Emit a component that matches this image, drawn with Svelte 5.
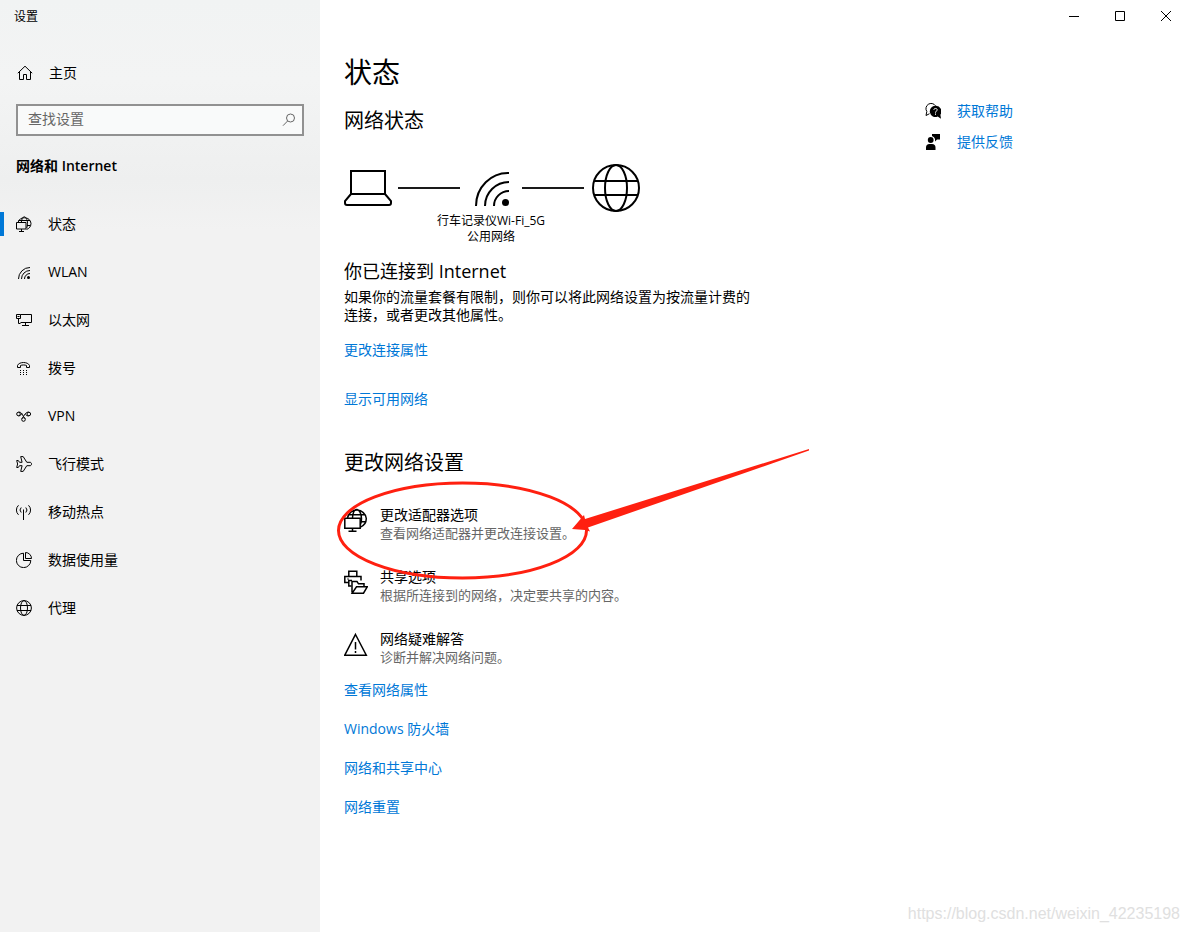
<script lang="ts">
	interface NavItem {
		id: string;
		label: string;
	}

	const navItems: NavItem[] = [
		{ id: 'status', label: '状态' },
		{ id: 'wlan', label: 'WLAN' },
		{ id: 'ethernet', label: '以太网' },
		{ id: 'dialup', label: '拨号' },
		{ id: 'vpn', label: 'VPN' },
		{ id: 'airplane', label: '飞行模式' },
		{ id: 'hotspot', label: '移动热点' },
		{ id: 'usage', label: '数据使用量' },
		{ id: 'proxy', label: '代理' }
	];

	const options = [
		{ id: 'adapter', title: '更改适配器选项', desc: '查看网络适配器并更改连接设置。' },
		{ id: 'sharing', title: '共享选项', desc: '根据所连接到的网络，决定要共享的内容。' },
		{ id: 'trouble', title: '网络疑难解答', desc: '诊断并解决网络问题。' }
	];

	const moreLinks = ['查看网络属性', 'Windows 防火墙', '网络和共享中心', '网络重置'];

	let active = $state('status');
	let query = $state('');
</script>

{#snippet navIcon(id: string)}
	<svg class="icon" viewBox="0 0 16 16" width="16" height="16" aria-hidden="true">
		{#if id === 'status'}
			<path d="M2 6.500A6.700 6.700 0 0 1 15 7.300a6.700 6.700 0 0 1-4.500 6.200M5.300 6.500C5.600 3 6.800.8 8.300.8s3.200 2.900 3.200 6.500c0 2.200-.3 3.700-.9 4.700M2.500 4.500H14M11 9.500h3.500" />
			<path d="M.5 6.500h9.500v6.500H.5zM5.500 13v2.500M3 15.500h5" />
		{:else if id === 'wlan'}
			<path d="M2.500 15A11.500 11.500 0 0 1 14 3.500M5.500 15A8.500 8.500 0 0 1 14 6.500M8.500 15A5.500 5.500 0 0 1 14 9.500" />
			<circle class="solid" cx="12.500" cy="13.500" r="1.500" />
		{:else if id === 'ethernet'}
			<path d="M4.500 2.500h11v8h-11M.5 2.500h4v4h-4zM2.500 6.500v5h2M1.500 4.500h2M9.500 10.500v3M6 13.500h7" />
		{:else if id === 'dialup'}
			<path d="M1.500 7.500V5.500C3 1.500 12 1.500 13.500 5.500v2h-3v-2C9 4.800 6 4.800 4.500 5.500v2z" />
			<path d="M4 10.500h1M7 10.500h1M10 10.500h1M4 12.500h1M7 12.500h1M10 12.500h1M4 14.500h1M7 14.500h1M10 14.500h1" />
		{:else if id === 'vpn'}
			<circle cx="2.500" cy="6" r="1.800" />
			<circle cx="12.800" cy="6" r="1.800" />
			<circle cx="7.500" cy="11.500" r="1.800" />
			<path d="M2.500 4.200C6 3.500 6 7.500 9.200 10.500M2.500 7.800C4.500 8 5 6.500 6 5.500M12.800 4.200C9.500 3.700 8.500 7.500 5.900 10.500M12.800 7.800C11 8 10.500 7.500 9.500 6.500" />
		{:else if id === 'airplane'}
			<path d="M4.700.6h2.500l3.600 5.700h3.200c2 0 2 3.400 0 3.400h-3.200L7.200 15.400H4.700l1.400-5.700H3.500L2.300 11.500H.7L1.600 8 .7 4.500h1.600L3.500 6.300h2.600z" />
		{:else if id === 'hotspot'}
			<path d="M7.500 5.500V16M5.200 3.500a3.600 3.600 0 0 0 0 5M9.800 3.500a3.600 3.600 0 0 1 0 5M2.500 1.300a6.500 6.500 0 0 0 0 9.500M12.500 1.300a6.500 6.500 0 0 1 0 9.500" />
		{:else if id === 'usage'}
			<path d="M7.500 1.200A7.200 7.200 0 1 0 14.800 8.500H7.500zM9.500.5v6h6a6 6 0 0 0-6-6z" />
		{:else}
			<circle cx="8" cy="8" r="7.400" />
			<ellipse cx="8" cy="8" rx="3.500" ry="7.400" />
			<path d="M1 5.500h14M1 10.500h14" />
		{/if}
	</svg>
{/snippet}

{#snippet optionIcon(id: string)}
	<svg class="option-icon" viewBox="0 0 24 24" width="24" height="24" aria-hidden="true">
		{#if id === 'adapter'}
			<path d="M3.500 10A9.500 9.500 0 0 1 22.300 10.500a9.500 9.500 0 0 1-5.800 8.600M8.500 10C8.800 5 10.500 1.500 12.800 1.500s4.700 4 4.700 9c0 2.500-.3 4.500-1 6M4.500 6.800h16.800M17 13.800h4.500" />
			<path d="M.8 10.200h15.400v10H.8zM8.500 20.200v3.300M4.500 23.300h8" />
		{:else if id === 'sharing'}
			<path d="M4.800 6.500V1.200h8v5.300M4.500 12.500H.8v-6H17v4M3.500 9h1M7.500 16H4.800v-5.500H8" />
			<path d="M8 22.500V11.500h5l1.500 2.300H20v3M8.200 23.200l4.300-6.400h10.700L19.500 23.200z" />
		{:else}
			<path d="M11.500 2.500L22.300 23.200H.8zM11.500 10v7.500M11.500 19v2" />
		{/if}
	</svg>
{/snippet}

<div class="window">
	<aside class="sidebar">
		<div class="app-title">设置</div>
		<a class="home" href="#home">
			<svg class="icon" viewBox="0 0 16 16" width="16" height="16" aria-hidden="true">
				<path d="M.8 8.200L8 1.200l7.200 7M2.500 7v7.500h4v-5h3v5h4V7" />
			</svg>
			主页
		</a>

		<div class="search">
			<input type="text" placeholder="查找设置" aria-label="查找设置" bind:value={query} />
			<button class="search-btn" aria-label="搜索">
				<svg viewBox="0 0 14 14" width="14" height="14" aria-hidden="true">
					<circle cx="8.500" cy="5" r="4" />
					<path d="M5.600 8L1 12.700" />
				</svg>
			</button>
		</div>

		<h2 class="category">网络和 Internet</h2>

		<nav>
			{#each navItems as item (item.id)}
				<a
					class="nav-item"
					class:active={active === item.id}
					href="#{item.id}"
					onclick={() => (active = item.id)}
				>
					{@render navIcon(item.id)}
					{item.label}
				</a>
			{/each}
		</nav>
	</aside>

	<div class="main">
		<header class="controls">
			<button aria-label="最小化">
				<svg viewBox="0 0 10 10" width="10" height="10"><path d="M0 5.500h10" /></svg>
			</button>
			<button aria-label="最大化">
				<svg viewBox="0 0 10 10" width="10" height="10"><path d="M.5.5h9v9h-9z" /></svg>
			</button>
			<button aria-label="关闭">
				<svg viewBox="0 0 10 10" width="10" height="10"><path d="M0 0l10 10M10 0L0 10" /></svg>
			</button>
		</header>

		<div class="page">
			<main class="content">
				<h1>状态</h1>
				<h2 class="section-title first">网络状态</h2>

				<div class="diagram">
					<svg viewBox="0 0 48 48" width="48" height="48" aria-hidden="true">
						<path d="M7 30V7h34v23zM7 30l-6 7v2q0 2 2 2h42q2 0 2-2v-2l-6-7" />
					</svg>
					<span class="wire"></span>
					<svg viewBox="0 0 48 48" width="48" height="48" aria-hidden="true">
						<path d="M8 42A32 33 0 0 1 41 9M17 42A24 24 0 0 1 41 18M26 42A15 15 0 0 1 41 27" />
						<circle class="solid" cx="37.500" cy="38.500" r="3.500" />
					</svg>
					<span class="wire"></span>
					<svg viewBox="0 0 48 48" width="48" height="48" aria-hidden="true">
						<circle cx="24" cy="24" r="23" />
						<ellipse cx="24" cy="24" rx="11" ry="23" />
						<path d="M2 17h44M2 31h44" />
					</svg>
					<div class="network-name">行车记录仪Wi-Fi_5G<br />公用网络</div>
				</div>

				<h3>你已连接到 Internet</h3>
				<p>如果你的流量套餐有限制，则你可以将此网络设置为按流量计费的连接，或者更改其他属性。</p>
				<a class="link" href="#properties">更改连接属性</a>
				<a class="link available" href="#available">显示可用网络</a>

				<section class="change">
					<h2 class="section-title">更改网络设置</h2>
					<div class="options">
						{#each options as option (option.id)}
							<a class="option" href="#{option.id}">
								{@render optionIcon(option.id)}
								<span>
									<span class="option-title">{option.title}</span>
									<span class="option-desc">{option.desc}</span>
								</span>
							</a>
						{/each}
					</div>
					<svg class="markup" viewBox="0 0 480 136" width="480" height="136" aria-hidden="true">
						<ellipse cx="126.500" cy="81.500" rx="124" ry="47.500" />
						<path d="M236 80l12-14 1 4L473 0v1.500L252 78.500l2 4-5-1.500z" />
					</svg>
				</section>

				<div class="more-links">
					{#each moreLinks as text (text)}
						<a class="link" href="#more">{text}</a>
					{/each}
				</div>
			</main>

			<aside class="help">
				<a class="link" href="#help">
					<svg viewBox="0 0 16 16" width="16" height="16" aria-hidden="true">
						<path class="bubble" d="M10.500 2.800A5.200 5.200 0 1 0 1.800 8.500L1 12.500l3.500-1.800" />
						<path d="M10.500 2.800a5.600 5.600 0 1 0 2.200 10.700L16 15.700l-.6-4A5.600 5.600 0 0 0 10.500 2.800z" />
						<path class="question" d="M8.800 6.800c.2-2 3.700-1.700 3.400.3-.2 1.100-1.700 1-1.700 2.600M10.500 10.500v1.300" />
					</svg>
					获取帮助
				</a>
				<a class="link" href="#feedback">
					<svg viewBox="0 0 16 16" width="16" height="16" aria-hidden="true">
						<circle cx="5.700" cy="6" r="2.900" />
						<path d="M1 16v-2.500Q1 10 4.500 10h2.500Q10.500 10 10.500 13.500V16zM7 0h8v5.500h-3L10 7.500V5Q9.500 3 7 2z" />
					</svg>
					提供反馈
				</a>
			</aside>
		</div>
		<footer>https://blog.csdn.net/weixin_42235198</footer>
	</div>
</div>

<style>
	:global(body) {
		background: #fff;
	}

	.window {
		display: flex;
		min-height: 100vh;
		font-family: 'Open Sans', 'Noto Sans CJK SC', sans-serif;
		font-size: 14px;
		line-height: 20px;
		color: #000;
	}

	a {
		color: inherit;
		text-decoration: none;
	}

	h1,
	h2,
	h3,
	p {
		margin: 0;
		font-weight: 400;
	}

	button {
		padding: 0;
		border: 0;
		background: none;
	}

	svg {
		display: block;
		flex: none;
		fill: none;
		stroke: #000;
	}

	.solid {
		fill: #000;
		stroke: none;
	}

	.sidebar {
		flex: none;
		width: 320px;
		background: linear-gradient(#f1f3f3, #f3f4f4 80px, #eeefef 180px, #f2f2f2 230px);
	}

	.app-title {
		height: 32px;
		padding-left: 14px;
		font-size: 12px;
		line-height: 34px;
	}

	.home,
	.nav-item {
		display: flex;
		align-items: center;
		gap: 16px;
		height: 48px;
		padding-left: 16px;
	}

	.home {
		margin-top: 17px;
		padding-left: 17px;
	}

	.search {
		display: flex;
		height: 28px;
		margin: 7px 16px 0;
		border: 2px solid #919191;
		background: #f9fafa;
	}

	.search input {
		flex: 1;
		min-width: 0;
		padding: 0 10px 2px;
		border: 0;
		outline: none;
		background: none;
		font: inherit;
	}

	.search input::placeholder {
		color: #666;
		opacity: 1;
	}

	.search-btn {
		display: grid;
		place-items: center;
		width: 26px;
	}

	.search-btn svg {
		stroke: #666;
	}

	.category {
		margin: 20px 16px 24px;
		font-size: 14px;
		font-weight: 600;
	}

	.nav-item.active {
		background: linear-gradient(#0078d7, #0078d7) 0 center / 4px 24px no-repeat;
	}

	.main {
		display: flex;
		flex: 1;
		flex-direction: column;
		min-width: 0;
	}

	.controls {
		display: flex;
		justify-content: flex-end;
	}

	.controls button {
		display: grid;
		place-items: center;
		width: 46px;
		height: 32px;
	}

	.page {
		display: flex;
		flex: 1;
		justify-content: space-between;
		padding: 22px 0 0 24px;
	}

	.content {
		max-width: 408px;
	}

	h1 {
		font-size: 28px;
		line-height: 36px;
	}

	.section-title {
		font-size: 20px;
		line-height: 28px;
	}

	.section-title.first {
		margin-top: 17px;
	}

	.diagram {
		display: grid;
		grid-template-columns: 48px 62px 50px 62px 50px;
		column-gap: 6px;
		align-items: center;
		margin-top: 29px;
	}

	.diagram svg {
		justify-self: end;
		stroke-width: 2;
	}

	.wire {
		height: 2px;
		background: #1a1a1a;
	}

	.network-name {
		grid-column: 3;
		justify-self: center;
		margin-top: 1px;
		font-size: 12px;
		line-height: 16px;
		text-align: center;
		white-space: nowrap;
	}

	h3 {
		margin-top: 14px;
		font-size: 18px;
		line-height: 24px;
	}

	p {
		margin: 5px 0 16px;
		line-height: 18px;
	}

	.link {
		display: block;
		width: fit-content;
		color: #0078d7;
	}

	.available {
		margin-top: 29px;
	}

	.change {
		position: relative;
		margin-top: 40px;
	}

	.options {
		display: grid;
		gap: 26px;
		margin-top: 29px;
	}

	.option {
		display: flex;
		gap: 12px;
		line-height: 18px;
	}

	.option-icon {
		margin-top: 2px;
		stroke-width: 1.5;
	}

	.option-title,
	.option-desc {
		display: block;
	}

	.option-desc {
		font-size: 13px;
		color: #666;
	}

	.markup {
		position: absolute;
		top: 0;
		left: -8px;
		pointer-events: none;
	}

	.markup ellipse {
		stroke: #ff2010;
		stroke-width: 3;
	}

	.markup path {
		fill: #ff2010;
		stroke: none;
	}

	.more-links {
		display: grid;
		gap: 19px;
		margin-top: 14px;
	}

	.help {
		display: grid;
		align-content: start;
		gap: 11px;
		width: 264px;
		padding-top: 47px;
	}

	.help .link {
		display: flex;
		align-items: center;
		gap: 16px;
	}

	.help svg {
		fill: #000;
		stroke: none;
	}

	.help .bubble {
		fill: none;
		stroke: #000;
	}

	.help .question {
		fill: none;
		stroke: #fff;
	}

	footer {
		padding: 0 9px 8px;
		font-family: 'Liberation Sans', Arial, sans-serif;
		font-size: 16px;
		text-align: right;
		color: #e0e0e0;
	}
</style>
